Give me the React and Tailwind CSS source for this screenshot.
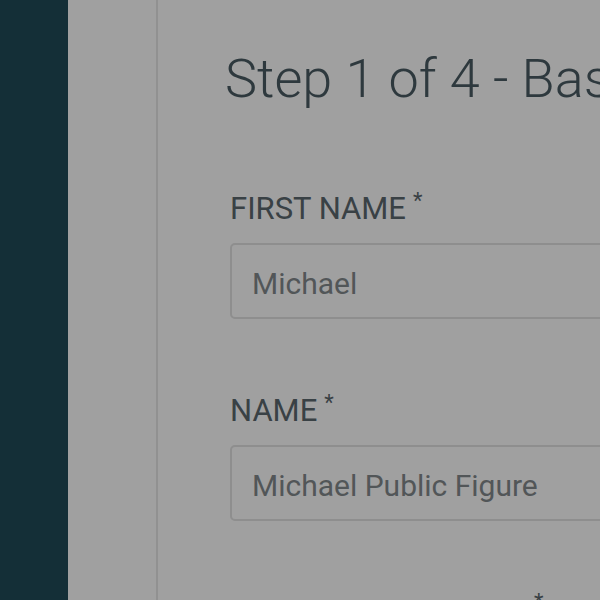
export default function App() {
  return (
    <div className="flex h-[600px] w-[600px] overflow-hidden bg-[#a0a0a0] font-['Roboto',sans-serif]">
      <aside className="w-[68px] shrink-0 bg-[#142f37]" />
      <div className="w-[90px] shrink-0 border-r-2 border-[#919191]" />
      <main className="shrink-0 w-[900px] pl-[67px] pt-[47px]">
        <h1 className="whitespace-nowrap text-[54px] font-light leading-[64px] text-[#2e393e]">
          Step 1 of 4 - Basic Information
        </h1>

        <div className="mt-[81px]">
          <label className="flex items-start gap-[7px] whitespace-nowrap pl-[5px] text-[31px] leading-[34px] text-[#394145]">
            FIRST NAME<span className="-mt-[3px] text-[22px] leading-[24px]">*</span>
          </label>
          <div className="ml-[5px] mt-[17px] flex h-[76px] items-center rounded-[5px] border-2 border-[#8e8e8e] pl-[20px] pt-[4px] text-[30px] text-[#525658]">
            Michael
          </div>
        </div>

        <div className="mt-[75px]">
          <label className="flex items-start gap-[7px] whitespace-nowrap pl-[5px] text-[31px] leading-[34px] text-[#394145]">
            NAME<span className="-mt-[3px] text-[22px] leading-[24px]">*</span>
          </label>
          <div className="ml-[5px] mt-[17px] flex h-[76px] items-center rounded-[5px] border-2 border-[#8e8e8e] pl-[20px] pt-[4px] text-[30px] text-[#525658]">
            Michael Public Figure
          </div>
        </div>

        <div className="mt-[74px]">
          <label className="flex items-start gap-[7px] whitespace-nowrap pl-[5px] text-[31px] leading-[34px] text-[#394145]">
            PUBLIC FIGURE TYPE<span className="-mt-[5px] text-[22px] leading-[24px]">*</span>
          </label>
        </div>
      </main>
    </div>
  );
}
